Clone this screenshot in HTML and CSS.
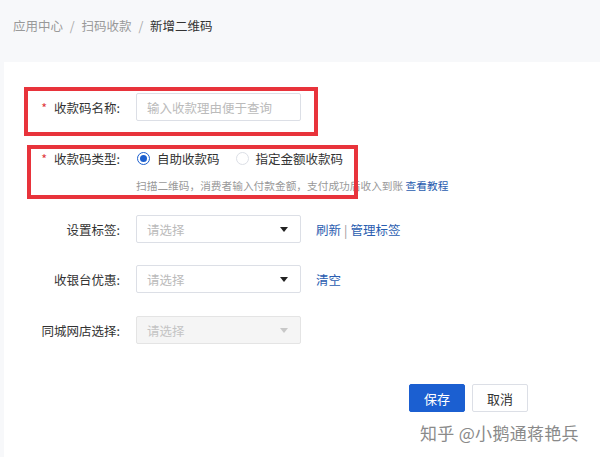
FILE: index.html
```html
<!DOCTYPE html>
<html lang="zh-CN">
<head>
  <meta charset="UTF-8">
  <title>新增二维码</title>
  <link rel="stylesheet" href="styles.css">
</head>
<body>
  <!-- Breadcrumb -->
  <div class="breadcrumb">
    <span class="crumb">应用中心</span>
    <span class="sep">/</span>
    <span class="crumb">扫码收款</span>
    <span class="sep">/</span>
    <span class="crumb current">新增二维码</span>
  </div>

  <!-- Form card -->
  <div class="card">
    <div class="form-row row-name">
      <div class="mark mark-name"></div>
      <label class="label"><span class="star">*</span>收款码名称:</label>
      <input class="input" type="text" placeholder="输入收款理由便于查询">
    </div>

    <div class="form-row row-type">
      <div class="mark mark-type"></div>
      <label class="label"><span class="star">*</span>收款码类型:</label>
      <span class="radio checked"></span>
      <span class="radio-text">自助收款码</span>
      <span class="radio"></span>
      <span class="radio-text">指定金额收款码</span>
    </div>
    <div class="hint">扫描二维码，消费者输入付款金额，支付成功后收入到账 <a class="link">查看教程</a></div>

    <div class="form-row row-tag">
      <label class="label">设置标签:</label>
      <div class="select"><span>请选择</span><span class="arrow"></span></div>
      <a class="link action">刷新</a><span class="bar">|</span><a class="link">管理标签</a>
    </div>

    <div class="form-row row-discount">
      <label class="label">收银台优惠:</label>
      <div class="select"><span>请选择</span><span class="arrow"></span></div>
      <a class="link action">清空</a>
    </div>

    <div class="form-row row-store">
      <label class="label">同城网店选择:</label>
      <div class="select disabled"><span>请选择</span><span class="arrow"></span></div>
    </div>

    <div class="buttons">
      <button class="btn primary">保存</button>
      <button class="btn">取消</button>
    </div>
  </div>

  <div class="watermark">知乎 @小鹅通蒋艳兵</div>
</body>
</html>
```

FILE: styles.css
```css
body {
  margin: 0;
  background: #f7f8fa;
  font-family: "Noto Sans CJK SC", "Noto Sans", sans-serif;
  font-size: 12.5px;
  color: #333;
  height: 457px;
  overflow: hidden;
  position: relative;
}
.breadcrumb {
  height: 62px;
  box-sizing: border-box;
  padding: 16px 0 0 13px;
  line-height: 20px;
  color: #999;
}
.breadcrumb .sep {
  margin: 0 4px;
  color: #aaa;
}
.breadcrumb .current {
  color: #333;
}
.card {
  margin-left: 4px;
  background: #fff;
  height: 395px;
  padding-top: 31px;
  box-sizing: border-box;
}
.form-row {
  display: flex;
  align-items: center;
  height: 28px;
  position: relative;
}
.label {
  width: 116px;
  margin-right: 16px;
  text-align: right;
  color: #333;
  white-space: nowrap;
}
.star {
  color: #e0393e;
  margin-right: 7px;
}
.input,
.select {
  width: 165px;
  height: 28px;
  box-sizing: border-box;
  border: 1px solid #dcdfe6;
  border-radius: 2px;
  padding: 0 10px;
  font-family: inherit;
  font-size: 12.5px;
  color: #333;
  background: #fff;
}
.input::placeholder {
  color: #bbb;
}
.select {
  display: flex;
  align-items: center;
  justify-content: space-between;
  color: #bbb;
}
.select .arrow {
  width: 0;
  height: 0;
  border-left: 4px solid transparent;
  border-right: 4px solid transparent;
  border-top: 5px solid #222;
  margin-right: 2px;
}
.select.disabled {
  background: #f5f5f5;
  border-color: #e4e4e4;
  color: #c4c4c4;
}
.select.disabled .arrow {
  border-top-color: #c8c8c8;
}
.row-type {
  margin-top: 23px;
}
.radio {
  width: 13px;
  height: 13px;
  border: 1px solid #dcdfe6;
  border-radius: 50%;
  box-sizing: border-box;
  margin: 0 7px 0 1px;
  position: relative;
}
.radio.checked {
  border-color: #1c5fce;
}
.radio.checked::after {
  content: "";
  position: absolute;
  left: 2px;
  top: 2px;
  width: 7px;
  height: 7px;
  border-radius: 50%;
  background: #1c5fce;
}
.radio-text {
  margin-right: 15px;
  color: #333;
}
.hint {
  margin: 6px 0 0 132px;
  line-height: 16px;
  font-size: 10.7px;
  color: #999;
}
.link {
  color: #2a5db0;
  cursor: pointer;
}
.action {
  margin-left: 15px;
}
.bar {
  margin: 0 3px;
  color: #999;
}
.row-tag {
  margin-top: 21px;
}
.row-discount {
  margin-top: 22px;
}
.row-store {
  margin-top: 23px;
}
.buttons {
  display: flex;
  gap: 7px;
  margin: 40px 0 0 405px;
}
.btn {
  width: 56px;
  height: 28px;
  border: 1px solid #dcdfe6;
  border-radius: 2px;
  background: #fff;
  color: #333;
  font-family: inherit;
  font-size: 13px;
  padding: 0;
}
.btn.primary {
  background: #1b5fd1;
  border-color: #1b5fd1;
  color: #fff;
}
/* red annotation boxes drawn over the form */
.mark {
  position: absolute;
  border: 4px solid #e8333b;
  box-sizing: border-box;
  pointer-events: none;
}
.mark-name {
  left: 20px;
  top: -6px;
  width: 294px;
  height: 49px;
}
.mark-type {
  left: 23px;
  top: 1px;
  width: 331px;
  height: 54px;
}
.watermark {
  position: absolute;
  left: 420px;
  top: 420px;
  font-size: 17px;
  color: #8a8a8a;
  text-shadow: 0 0 2px #fff, 0 0 2px #fff;
  letter-spacing: 0.3px;
}
```
